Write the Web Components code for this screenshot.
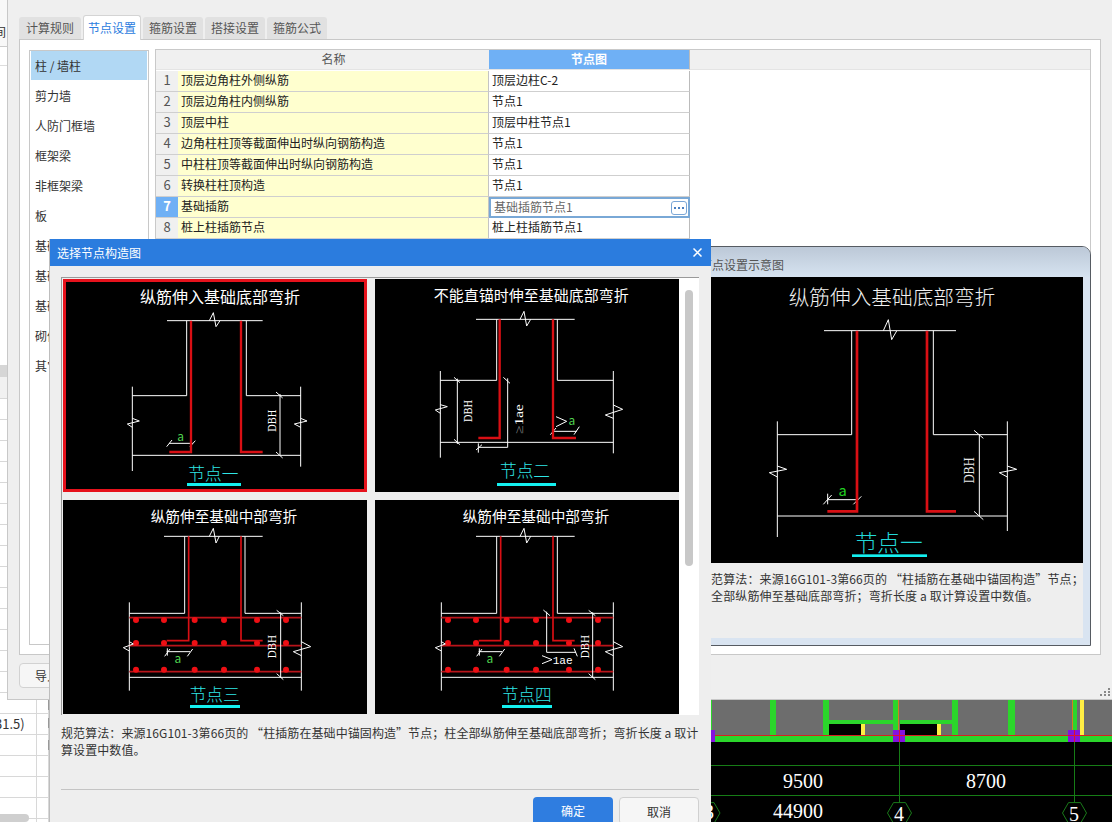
<!DOCTYPE html>
<html lang="zh">
<head>
<meta charset="utf-8">
<title>节点设置</title>
<style>
html,body{margin:0;padding:0;background:#efefef;overflow:hidden}
body{font:12px "Noto Sans CJK SC","Noto Sans",sans-serif;color:#333}
</style>
</head>
<body>
<app-desktop>
  <sheet-backdrop></sheet-backdrop>
  <cad-view></cad-view>
  <settings-window></settings-window>
  <diagram-popup></diagram-popup>
  <node-dialog></node-dialog>
</app-desktop>
<script>
const FONT = '"Noto Sans CJK SC","Noto Sans",sans-serif';
function define(name, css, html, onConnect){
  customElements.define(name, class extends HTMLElement{
    constructor(){
      super();
      const r = this.attachShadow({mode:'open'});
      r.innerHTML = '<style>'+css+'</style>'+html;
    }
    connectedCallback(){ if(onConnect) onConnect(this); }
  });
}

/* ---------- CAD figure drawing helpers (coordinates are 3x page pixels) ---------- */
const pl = (pts,c='#fff',w=3)=>`<polyline points="${pts}" fill="none" stroke="${c}" stroke-width="${w}"/>`;
const tx = (x,y,s,size,fill,extra='')=>`<text x="${x}" y="${y}" font-size="${size}" fill="${fill}" text-anchor="middle" ${extra}>${s}</text>`;
const ttl = (x,y,s,size,fill='#fff')=>tx(x,y,s,size,fill,'font-weight="300"');
const rot = (cx,cy,s,size,len,fill='#fff',fam='Liberation Serif')=>`<text x="${cx}" y="${cy}" font-size="${size}" fill="${fill}" text-anchor="middle" dominant-baseline="central" style="font-family:'${fam}'" textLength="${len}" lengthAdjust="spacingAndGlyphs" transform="rotate(-90 ${cx} ${cy})">${s}</text>`;
const dots = (ys,xs)=>ys.map(y=>xs.map(x=>`<circle cx="${x}" cy="${y}" r="9" fill="#ee0f14"/>`).join('')).join('');
const green='#4fd24f', cyan='#2fe6e6', red='#d90f14';
const FIGS = {
  one:{vb:'39 27 912 639',w:304,h:213,body:
    tx(510,100,'纵筋伸入基础底部弯折',48,'#fff')+
    pl('351,152 638,152')+pl('478,152 490,128 498,170 510,152')+
    pl('410,152 410,377 247,377')+pl('247,350 247,603')+
    pl('589,152 589,377 752,377')+pl('752,350 752,590')+pl('247,556 752,556')+
    pl('690,372 690,556')+pl('678,366 698,384')+pl('678,546 698,564')+
    rot(665,452,'DBH',40,66)+
    pl('247,445 268,453 232,462 247,472')+pl('752,445 771,453 733,462 752,472')+
    pl('357,520 428,520')+pl('350,530 366,510')+pl('420,530 436,512')+
    pl('423,152 423,546 358,546',red,7)+pl('573,152 573,546 638,546',red,7)+
    tx(392,512,'a',36,green)+
    ttl(490,630,'节点一',50,cyan)+`<rect x="411" y="639" width="162" height="9" fill="#14f0f0"/>`},
  two:{vb:'15 27 912 639',w:304,h:213,body:
    tx(484,93,'不能直锚时伸至基础底部弯折',45,'#fff')+
    pl('318,148 614,148')+pl('450,148 462,124 470,168 482,148')+
    pl('380,148 380,331 211,331')+pl('211,303 211,563')+
    pl('562,148 562,331 730,331')+pl('730,303 730,550')+pl('211,517 730,517')+
    pl('262,326 262,522')+pl('252,322 270,338')+pl('252,508 270,524')+rot(292,423,'DBH',40,66)+
    pl('413,325 413,532 325,532')+pl('400,322 420,340')+pl('325,520 325,548')+pl('318,540 336,524')+
    rot(446,447,'<tspan fill="#888">≥</tspan>1ae',36,88)+
    pl('211,404 232,410 196,420 211,430')+pl('730,405 758,418 706,435 730,445')+
    pl('558,440 590,454 558,470')+pl('548,484 620,484')+pl('541,494 558,474')+pl('612,494 628,470')+
    pl('389,148 389,504 325,504',red,7)+pl('549,148 549,504 618,504',red,7)+
    tx(606,465,'a',36,green)+
    ttl(465,622,'节点二',50,cyan)+`<rect x="381" y="639" width="177" height="9" fill="#14f0f0"/>`},
  three:{vb:'39 15 912 642',w:304,h:214,body:
    tx(522,82,'纵筋伸至基础中部弯折',44,'#fff')+
    pl('342,124 638,124')+pl('478,124 490,100 498,144 508,124')+
    pl('404,124 404,355 238,355')+pl('238,322 238,587')+
    pl('585,124 585,355 754,355')+pl('754,322 754,587')+pl('238,547 754,547')+
    pl('238,368 754,368','#b8141a',5)+pl('238,452 754,452','#b8141a',5)+pl('238,530 754,530','#b8141a',5)+
    dots([375,444,524],[258,342,434,522,621,708])+
    pl('416,124 416,437 350,437',red,5)+pl('573,124 573,437 638,437',red,5)+
    pl('692,352 692,547')+pl('680,346 700,362')+pl('680,536 700,554')+rot(666,455,'DBH',40,70)+
    pl('350,470 420,470')+pl('352,460 352,482')+pl('344,484 360,462')+pl('412,484 428,462')+
    tx(384,504,'a',36,green)+
    pl('238,440 250,447 220,458 238,468')+pl('754,440 782,455 730,470 754,482')+
    ttl(494,618,'节点三',50,cyan)+`<rect x="420" y="630" width="150" height="9" fill="#14f0f0"/>`},
  four:{vb:'15 15 912 642',w:304,h:214,body:
    tx(498,82,'纵筋伸至基础中部弯折',44,'#fff')+
    pl('318,124 614,124')+pl('450,124 462,100 470,144 482,124')+
    pl('380,124 380,355 214,355')+pl('214,322 214,587')+
    pl('562,124 562,355 730,355')+pl('730,322 730,587')+pl('214,547 730,547')+
    pl('214,368 730,368','#b8141a',5)+pl('214,452 730,452','#b8141a',5)+pl('214,530 730,530','#b8141a',5)+
    dots([375,444,524],[234,318,410,498,597,684])+
    pl('392,124 392,437 326,437',red,5)+pl('549,124 549,437 614,437',red,5)+
    pl('530,350 530,472 618,472')+pl('520,345 540,362')+pl('612,460 622,484')+
    pl('668,352 668,547')+pl('656,346 676,362')+pl('656,536 676,554')+rot(644,455,'DBH',40,70)+
    pl('326,470 396,470')+pl('328,460 328,482')+pl('320,484 336,462')+pl('388,484 404,462')+
    tx(360,504,'a',36,green)+
    pl('516,482 546,494 516,506')+`<text x="548" y="506" font-size="33" fill="#fff" style="font-family:'Liberation Mono'" textLength="60" lengthAdjust="spacingAndGlyphs">1ae</text>`+
    pl('214,440 226,447 196,458 214,468')+pl('730,440 758,455 706,470 730,482')+
    ttl(470,618,'节点四',50,cyan)+`<rect x="396" y="630" width="150" height="9" fill="#14f0f0"/>`},
  big:{vb:'-3 110 1149 858',w:383,h:286,body:
    ttl(576,193,'纵筋伸入基础底部弯折',62,'#f0f0f0')+
    pl('372,271 768,271')+pl('550,271 565,238 575,298 590,272')+
    pl('455,271 455,583 232,583')+pl('232,543 232,890')+
    pl('700,271 700,583 922,583')+pl('922,543 922,872')+pl('232,827 922,827')+
    pl('838,583 838,827')+pl('822,570 850,594')+pl('822,813 850,838')+
    rot(805,690,'DBH',46,78,'#e8e8e8')+
    pl('232,677 260,687 208,697 232,710')+pl('922,677 950,687 898,697 922,710')+
    pl('383,778 471,778')+pl('383,760 383,792')+pl('370,792 395,764')+pl('460,792 484,768')+
    pl('471,271 471,813 382,813',red,8)+pl('681,271 681,813 768,813',red,8)+
    tx(428,768,'a',44,'#22d022')+
    ttl(566,931,'节点一',68,'#22d8d8')+`<rect x="456" y="942" width="225" height="8" fill="#14f0f0"/>`}
};
define('node-figure',
 `:host{display:block;position:relative;background:#000;line-height:0}
  svg{display:block}
  text{font-family:${FONT}}
  :host([selected])::after{content:"";position:absolute;inset:0;border:3px solid #e6121c}`,
 '<svg xmlns="http://www.w3.org/2000/svg"></svg>',
 el=>{
  const f=FIGS[el.getAttribute('kind')];
  const s=el.shadowRoot.querySelector('svg');
  s.setAttribute('viewBox',f.vb);s.setAttribute('width',f.w);s.setAttribute('height',f.h);
  s.innerHTML=f.body;
 });

/* ---------- desktop ---------- */
define('app-desktop',
 `:host{display:block;position:relative;width:1112px;height:822px;overflow:hidden;background:#efefef}`,
 `<slot></slot>`);

/* ---------- spreadsheet behind everything ---------- */
let sheetRows='';
for(let i=0;i<21;i++){
  sheetRows+=`<div class="r"><span class="a">${i===15?'<em>31.5)</em>':''}</span><span class="b"></span></div>`;
}
define('sheet-backdrop',
 `:host{position:absolute;left:0;top:0;width:49px;height:822px;background:#fff;display:flex;flex-direction:column;overflow:hidden;font-size:13px;color:#333}
  .head{background:#f8f8f8;border-bottom:1px solid #ccc;display:flex;align-items:flex-end;padding-bottom:6px;height:40px;flex:none}
  .head span{margin-left:-6px;font-size:12px;line-height:16px}
  .sub{height:18px;border-bottom:1px solid #ddd;flex:none}
  .blank{height:299px;flex:none}
  .band{height:12px;background:#d6d6d6;flex:none}
  .hdr{height:21px;background:#f1f1f1;border-bottom:1px solid #d8d8d8;flex:none}
  .r{height:20px;border-bottom:1px solid #d8d8d8;display:flex;line-height:20px;flex:none}
  .a{width:36px;border-right:1px solid #d8d8d8;white-space:nowrap;overflow:visible}
  .a em{font-style:normal;margin-left:-5px}
  .b{width:11px;border-right:1px solid #d8d8d8}
  .thumb{position:absolute;left:0;bottom:0;width:29px;height:8px;background:#cfcfcf;border-radius:0 4px 4px 0}
  .tick{position:absolute;left:48px;width:1px;background:#999}`,
 `<div class="head"><span>间</span></div><div class="sub"></div><div class="blank"></div><div class="band"></div><div class="hdr"></div>${sheetRows}
  <div class="tick" style="top:700px;height:10px"></div><div class="tick" style="top:718px;height:10px"></div><div class="tick" style="top:740px;height:10px"></div>
  <div class="thumb"></div>`);

/* ---------- CAD plan at the bottom right ---------- */
const hex=(cx,cy,r)=>{let p=[];for(let i=0;i<6;i++){const a=i*Math.PI/3;p.push((cx+r*Math.cos(a)).toFixed(1)+','+(cy+r*Math.sin(a)).toFixed(1));}return p.join(' ');};
define('cad-view',
 `:host{position:absolute;left:711px;top:699px;width:401px;height:123px;display:block;background:#000;line-height:0}
  text{font-family:"Liberation Serif",serif;font-size:20px;fill:#fff;text-anchor:middle}`,
 `<svg xmlns="http://www.w3.org/2000/svg" viewBox="711 699 401 123" width="401" height="123">
   <g shape-rendering="crispEdges">
   <rect x="711" y="699" width="401" height="1" fill="#9a9a9a"/>
   <rect x="711" y="700" width="401" height="35" fill="#6d6d6d"/>
   <rect x="711" y="700" width="1" height="30" fill="#2bd62b"/>
   <g fill="#2bd62b">
     <rect x="770" y="700" width="6" height="35"/><rect x="823" y="700" width="6" height="35"/>
     <rect x="893" y="700" width="6" height="35"/><rect x="952" y="700" width="6" height="35"/>
     <rect x="1008" y="700" width="7" height="35"/><rect x="1073" y="700" width="4" height="35"/>
     <rect x="829" y="720" width="64" height="4"/><rect x="900" y="720" width="52" height="4"/>
   </g>
   <rect x="898" y="700" width="1" height="35" fill="#d08020"/><rect x="1072" y="700" width="1" height="35" fill="#d08020"/>
   <rect x="829" y="724" width="32" height="11" fill="#000"/><rect x="900" y="724" width="37" height="11" fill="#000"/>
   <g fill="#ffee44"><rect x="861" y="724" width="4" height="11"/><rect x="937" y="724" width="4" height="11"/><rect x="1080" y="700" width="4" height="35"/></g>
   <rect x="711" y="736" width="401" height="6" fill="#2bd62b"/>
   <rect x="711" y="735" width="401" height="1" fill="#d82020"/>
   <g stroke="#167c16" stroke-width="1"><path d="M711 765.5H1112M711 795.5H1112M899.5 742V822M1074.5 742V822"/></g>
   <g fill="#8412e0"><rect x="711" y="730" width="4" height="12"/><rect x="893" y="730" width="12" height="12"/><rect x="1068" y="730" width="12" height="12"/></g>
   <g fill="#e01030"><rect x="893" y="735" width="12" height="1"/><rect x="899" y="730" width="1" height="12"/><rect x="1068" y="735" width="12" height="1"/><rect x="1074" y="730" width="1" height="12"/></g>
   </g>
   <g fill="#000" stroke="#1a7a1a"><polygon points="${hex(899.5,813,12)}"/><polygon points="${hex(1074.5,813,12)}"/><polygon points="${hex(708,813,12)}"/></g>
   <text x="803" y="788">9500</text><text x="986" y="788">8700</text><text x="798" y="818">44900</text>
   <text x="899" y="821">4</text><text x="1074" y="821">5</text><text x="709" y="819">3</text>
  </svg>`);

/* ---------- main settings window ---------- */
const names=['顶层边角柱外侧纵筋','顶层边角柱内侧纵筋','顶层中柱','边角柱柱顶等截面伸出时纵向钢筋构造','中柱柱顶等截面伸出时纵向钢筋构造','转换柱柱顶构造','基础插筋','桩上柱插筋节点'];
const vals=['顶层边柱C-2','节点1','顶层中柱节点1','节点1','节点1','节点1','基础插筋节点1','桩上柱插筋节点1'];
let gridHtml='<div class="g"><div class="h"></div><div class="h">名称</div><div class="h hb">节点图</div><div class="h"></div>';
names.forEach((n,i)=>{
  const sel=i===6;
  gridHtml+=`<div class="n${sel?' ns':''}">${i+1}</div><div class="y">${n}</div>`;
  gridHtml+= sel?`<div class="edit"><span class="et">${vals[i]}</span><span class="dots"><i></i><i></i><i></i></span></div>`:`<div class="v">${vals[i]}</div>`;
  gridHtml+='<div class="blank"></div>';
});
gridHtml+='</div>';
define('setting-grid',
 `:host{display:block;flex:1;min-width:0;border:1px solid #c9c9c9;background:#fff;box-sizing:border-box;color:#222;margin-top:-1px}
  .g{display:grid;grid-template-columns:22px 311px 201px 1fr;grid-auto-rows:21px}
  .g>div{box-sizing:border-box;border-bottom:1px solid #cfcfcf;line-height:18px;white-space:nowrap}
  .h{background:#f0f0f0;color:#555;text-align:center;height:20px;border-bottom-color:#e4e4e4!important}
  .hb{background:#6fb0f5;color:#fff;font-weight:700;border-right:1px solid #bbb}
  .n{background:#f0f0f0;color:#555;text-align:center;font-size:13px}
  .y{background:#ffffcf;padding-left:3px;border-right:1px solid #c4c4c4}
  .v{padding-left:3px;border-right:1px solid #bbb}
  .blank{border-bottom:none!important}
  .ns{background:#6fb0f5;color:#fff;font-weight:700}
  .edit{border:2px solid #79a8d6!important;padding-left:3px;line-height:17px!important;color:#666;display:flex;align-items:center;justify-content:space-between}
  .et{margin-top:-2px}
  .dots{width:16px;height:14px;border:1px solid #7aa6d6;border-radius:3px;box-sizing:border-box;margin-right:1px;display:flex;align-items:center;justify-content:center;gap:2px;background:#fff}
  .dots i{width:2px;height:2px;background:#4a7fc0;display:block}`,
 gridHtml);
define('settings-window',
 `:host{position:absolute;left:7px;top:0;width:1105px;height:700px;box-sizing:border-box;background:#efefef;border-left:1px solid #c8c8c8;border-bottom:1px solid #c8c8c8;padding:15px 0 0 11px;display:flex;flex-direction:column;color:#333}
  .tabs{display:flex;align-items:flex-end;gap:2px;height:24px;flex:none;position:relative;z-index:1}
  .tab{width:60px;height:22px;line-height:21px;text-align:center;background:#e1e1e1;color:#555;border-radius:3px 3px 0 0}
  .tab:first-child{width:62px}
  .tab.on{height:25px;line-height:24px;background:#fff;color:#2b7cde;width:58px;border:1px solid #d4d4d4;border-bottom:none;box-sizing:border-box;margin-bottom:-1px}
  .panel{width:1082px;height:616px;flex:none;box-sizing:border-box;border:1px solid #c8c8c8;background:#fff;padding:10px 9px 9px 9px;display:flex;gap:6px}
  .list{width:120px;flex:none;box-sizing:border-box;border:1px solid #c8c8c8;padding:0 1px;color:#333}
  .item{height:30px;line-height:29px;padding-left:4px;white-space:nowrap}
  .item.on{background:#b1d8f4;height:29px;margin-bottom:1px}
  .foot{flex:1;padding-top:8px}
  .btn{width:80px;height:25px;box-sizing:border-box;border:1px solid #d2d2d2;border-radius:4px;background:#f6f6f6;padding-left:15px;line-height:23px}
  .grip{position:absolute;right:2px;bottom:3px;line-height:0}`,
 `<div class="tabs"><div class="tab">计算规则</div><div class="tab on">节点设置</div><div class="tab">箍筋设置</div><div class="tab">搭接设置</div><div class="tab">箍筋公式</div></div>
  <div class="panel">
    <div class="list">
      <div class="item on">柱 / 墙柱</div><div class="item">剪力墙</div><div class="item">人防门框墙</div><div class="item">框架梁</div><div class="item">非框架梁</div><div class="item">板</div><div class="item">基础</div><div class="item">基础主梁</div><div class="item">基础次梁</div><div class="item">砌体结构</div><div class="item">其它</div>
    </div>
    <setting-grid></setting-grid>
  </div>
  <div class="foot"><div class="btn">导入规则</div></div>
  <div class="grip"><svg width="10" height="8" fill="#888"><rect x="8" y="0" width="2" height="2"/><rect x="4" y="3" width="2" height="2"/><rect x="8" y="3" width="2" height="2"/><rect x="0" y="6" width="2" height="2"/><rect x="4" y="6" width="2" height="2"/><rect x="8" y="6" width="2" height="2"/></svg></div>`);

/* ---------- floating preview ---------- */
define('diagram-popup',
 `:host{position:absolute;left:690px;top:246px;width:401px;height:400px;box-sizing:border-box;border:1px solid #565b62;border-radius:0 9px 0 0;background:#d9e4f1;display:flex;flex-direction:column;color:#333;overflow:hidden}
  .t{height:30px;flex:none;background:linear-gradient(#bcc8d7,#d6e3f0);line-height:36px;padding-left:9px;color:#555;box-sizing:border-box}
  .b{flex:1;margin:0 7px 7px 8px;background:#eee;display:flex;flex-direction:column}
  .d{padding:7px 0 0 0;line-height:17px;white-space:nowrap;color:#333;letter-spacing:.12px}`,
 `<div class="t">节点设置示意图</div>
  <div class="b"><node-figure kind="big"></node-figure>
  <div class="d">规范算法：来源16G101-3第66页的 “柱插筋在基础中锚固构造”节点；<br>柱全部纵筋伸至基础底部弯折；弯折长度 a 取计算设置中数值。</div></div>`);

/* ---------- node chooser dialog ---------- */
define('node-dialog',
 `:host{position:absolute;left:49px;top:239px;width:662px;height:583px;box-sizing:border-box;background:#eee;border-left:1px solid #bdbdbd;display:flex;flex-direction:column;color:#333;overflow:hidden}
  .title{height:27px;flex:none;background:#2b7cde;color:#fff;display:flex;align-items:center;justify-content:space-between;padding:0 9px 0 7px}
  .title svg{display:block}
  .body{padding:11px 12px 0 11px;flex:1;display:flex;flex-direction:column}
  .gal{height:437px;flex:none;display:flex;border-top:1px solid #999;border-left:1px solid #999;overflow:hidden}
  .grid{display:grid;grid-template-columns:304px 304px;gap:8px;padding:1px 0 0 1px;align-content:start;width:617px;flex:none;box-sizing:border-box}
  .track{flex:1;background:#fff;padding:12px 6px 0 6px;box-sizing:border-box}
  .thumb{height:276px;width:8px;background:#c8c8c8;border-radius:4px}
  .desc{line-height:17px;padding-top:9px;box-sizing:border-box;white-space:nowrap;border-bottom:1px solid #c4c4c4;height:75px;flex:none;letter-spacing:.08px}
  .foot{display:flex;justify-content:flex-end;gap:6px;padding-top:7px}
  .btn{width:80px;height:28px;line-height:27px;text-align:center;border-radius:4px;box-sizing:border-box}
  .ok{background:#2f7de0;color:#fff}
  .no{background:#f6f6f6;border:1px solid #d0d0d0;color:#333}`,
 `<div class="title"><span>选择节点构造图</span><svg width="9" height="9" viewBox="0 0 9 9"><path d="M.5.5l8 8M8.5.5l-8 8" stroke="#fff" stroke-width="1.5"/></svg></div>
  <div class="body">
    <div class="gal"><div class="grid">
      <node-figure kind="one" selected></node-figure><node-figure kind="two"></node-figure>
      <node-figure kind="three"></node-figure><node-figure kind="four"></node-figure>
    </div><div class="track"><div class="thumb"></div></div></div>
    <div class="desc">规范算法：来源16G101-3第66页的 “柱插筋在基础中锚固构造”节点；柱全部纵筋伸至基础底部弯折；弯折长度 a 取计<br>算设置中数值。</div>
    <div class="foot"><div class="btn ok">确定</div><div class="btn no">取消</div></div>
  </div>`);
</script>
</body>
</html>
